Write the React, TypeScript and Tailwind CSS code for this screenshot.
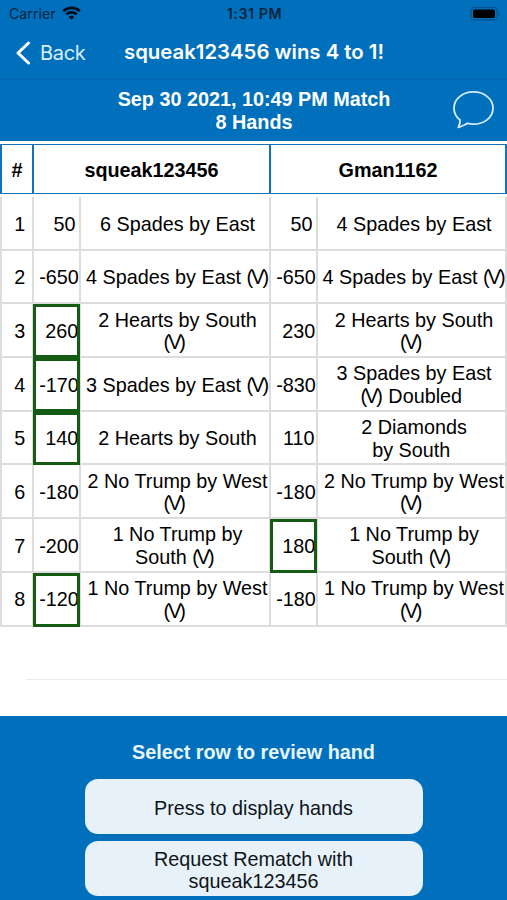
type Score = {
	points: number;
	contract: string[];
	won?: boolean;
};

type Hand = [Score, Score];

const HANDS: Hand[] = [
	[
		{ points: 50, contract: ["6 Spades by East"] },
		{ points: 50, contract: ["4 Spades by East"] },
	],
	[
		{ points: -650, contract: ["4 Spades by East (V)"] },
		{ points: -650, contract: ["4 Spades by East (V)"] },
	],
	[
		{ points: 260, contract: ["2 Hearts by South", "(V) "], won: true },
		{ points: 230, contract: ["2 Hearts by South", "(V) "] },
	],
	[
		{ points: -170, contract: ["3 Spades by East (V)"], won: true },
		{ points: -830, contract: ["3 Spades by East", "(V) Doubled "] },
	],
	[
		{ points: 140, contract: ["2 Hearts by South"], won: true },
		{ points: 110, contract: ["2 Diamonds", "by South "] },
	],
	[
		{ points: -180, contract: ["2 No Trump by West", "(V) "] },
		{ points: -180, contract: ["2 No Trump by West", "(V) "] },
	],
	[
		{ points: -200, contract: ["1 No Trump by", "South (V) "] },
		{ points: 180, contract: ["1 No Trump by", "South (V) "], won: true },
	],
	[
		{ points: -120, contract: ["1 No Trump by West", "(V) "], won: true },
		{ points: -180, contract: ["1 No Trump by West", "(V) "] },
	],
];

function StatusBar() {
	return (
		<div className="grid h-[27px] grid-cols-3 items-center pr-[5px] pl-[9px] font-[Inter,sans-serif] text-[14.2px] text-[#04243c]">
			<div className="flex items-center gap-[6px]">
				<span>Carrier</span>
				<svg width="19" height="14" viewBox="0 0 19 14" fill="none" stroke="#000f1c" strokeWidth="2.7">
					<path d="M1.200 5.200C5.800.700 13.200.700 17.800 5.200" />
					<path d="M4.300 8.500C7.200 5.700 11.800 5.700 14.700 8.500" />
					<path d="M9.500 13.700L6.600 10.900C8.200 9.400 10.800 9.400 12.400 10.900Z" fill="#000f1c" stroke="none" />
				</svg>
			</div>
			<span className="-ml-[2px] text-center font-semibold tracking-[0.600px] whitespace-nowrap">1:31 PM</span>
			<svg className="justify-self-end" width="32" height="14" viewBox="0 0 32 14">
				<rect x="1" y="0.500" width="26" height="12.500" rx="3.500" fill="none" stroke="#05568f" strokeWidth="1.300" />
				<rect x="3" y="2.500" width="22" height="8.500" rx="1.800" fill="#000" />
				<path d="M28.600 4.800C30.200 5.400 30.200 8.100 28.600 8.700Z" fill="#05568f" />
			</svg>
		</div>
	);
}

function NavBar() {
	return (
		<div className="flex h-[53px] items-center border-b border-[#0568ae] pb-px font-[Inter,sans-serif] text-white">
			<button type="button" className="flex items-center pl-[14px] text-[20px]">
				<svg width="18" height="24" viewBox="0 0 18 24" fill="none" stroke="#fff" strokeWidth="3" strokeLinecap="round" strokeLinejoin="round">
					<path d="M14.500 2L4 12L14.500 22" />
				</svg>
				<span className="w-[53px] pl-[8px] text-left tracking-[-0.300px] text-[#d9eefc]">Back</span>
			</button>
			<h1 className="pl-[39px] text-[20.350px] font-semibold whitespace-nowrap">
				squeak123456 wins 4 to 1!
			</h1>
		</div>
	);
}

function MatchHeader() {
	return (
		<div className="relative h-[61px] pt-[8px] pl-px text-center leading-[23px] font-bold text-white">
			<p>Sep 30 2021, 10:49 PM Match</p>
			<p>8 Hands</p>
			<svg className="absolute top-[10px] right-[12px]" width="44" height="40" viewBox="0 0 44 40" fill="none" stroke="#d4ecfb" strokeWidth="1.800" strokeLinejoin="round">
				<path d="M22.500 1.900C11.600 1.900 3 9 3 18.200C3 22.800 5.200 27 9 30C9.300 32.500 8.600 35 7.300 37.400C10.600 36.700 13.400 34.800 16.400 33.400C18.300 33.900 20.400 34.200 22.500 34.200C33.300 34.200 42 27.200 42 18.200C42 9 33.300 1.900 22.500 1.900Z" />
			</svg>
		</div>
	);
}

function ContractLine({ text }: { text: string }) {
	const [before, after] = text.split("(V)");

	return (
		<div>
			{before}
			{after !== undefined && (
				<>
					<span className="tracking-[-2px]">(V</span>)
				</>
			)}
			{after}
		</div>
	);
}

function ScoreCells({ score }: { score: Score }) {
	return (
		<>
			<div className="relative flex items-center justify-center border-r-2 border-[#dcdcdc] pt-[3px] pl-[5px] whitespace-pre">
				{String(score.points).padStart(4)}
				{score.won && (
					<div className="absolute top-0 -right-[1px] -bottom-[2px] -left-[1px] border-[3px] border-[#145c14]" />
				)}
			</div>
			<div className="flex flex-col items-center justify-center border-r-2 border-[#dcdcdc] pt-[2px] pl-[5px] text-center leading-[22.500px] whitespace-pre">
				{score.contract.map((line) => (
					<ContractLine key={line} text={line} />
				))}
			</div>
		</>
	);
}

function ScoreTable() {
	return (
		<div className="h-[575px] bg-white pt-[3px] text-black">
			<div className="grid h-[50px] grid-cols-[32px_237px_236px] border-y border-l-2 border-[#1273bb] text-center leading-[50px] font-bold">
				<div className="h-[48px] border-r-2 border-[#1273bb]">#</div>
				<div className="h-[48px] border-r-2 border-[#1273bb]">squeak123456</div>
				<div className="h-[48px] border-r-2 border-[#1273bb]">Gman1162</div>
			</div>
			<div className="mt-[3px] border-l-2 border-[#dcdcdc]">
				{HANDS.map(([left, right], index) => (
					<div
						key={index}
						className="grid h-[53.700px] grid-cols-[32px_47px_190px_47px_189px] border-b-2 border-[#dcdcdc]"
					>
						<div className="flex items-center justify-center border-r-2 border-[#dcdcdc] pt-[3px] whitespace-pre">
							{` ${index + 1}`}
						</div>
						<ScoreCells score={left} />
						<ScoreCells score={right} />
					</div>
				))}
			</div>
			<div className="mt-[52px] ml-[26px] border-t border-[#ececec]" />
		</div>
	);
}

function Actions() {
	return (
		<div className="flex flex-1 flex-col items-center gap-[7px] pt-[25px]">
			<p className="mb-[8px] leading-[23px] font-bold text-[#e8f6ff]">Select row to review hand</p>
			<button type="button" className="h-[55px] w-[338px] rounded-[13px] bg-[#e6f1f9] pt-[3px] leading-[22.500px] text-[#101418]">
				Press to display hands
			</button>
			<button type="button" className="h-[55px] w-[338px] rounded-[13px] bg-[#e6f1f9] pt-[3px] leading-[22.500px] text-[#101418]">
				Request Rematch with
				<br />
				squeak123456
			</button>
		</div>
	);
}

export default function App() {
	return (
		<div className="flex h-[900px] w-[507px] flex-col overflow-hidden bg-[#0070bc] font-['Liberation_Sans',Arial,sans-serif] text-[19.800px]">
			<StatusBar />
			<NavBar />
			<MatchHeader />
			<ScoreTable />
			<Actions />
		</div>
	);
}
